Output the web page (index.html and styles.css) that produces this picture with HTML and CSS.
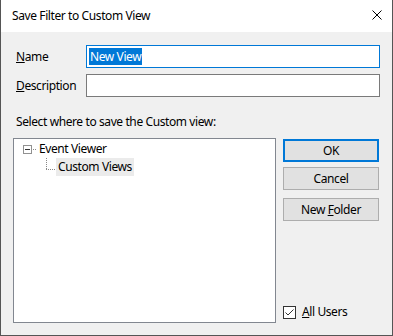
FILE: index.html
```html
<!DOCTYPE html>
<html lang="en">
<head>
    <meta charset="UTF-8">
    <title>Save Filter to Custom View</title>
    <link rel="stylesheet" href="styles.css">
</head>
<body>
    <div class="window">
        <div class="titlebar">
            <span class="title">Save Filter to Custom View</span>
            <svg class="close" width="10" height="10" viewBox="0 0 10 10">
                <path d="M0.5 0.5 L9.5 9.5 M9.5 0.5 L0.5 9.5" stroke="#000" stroke-width="1" fill="none"/>
            </svg>
        </div>

        <div class="content">
            <div class="field">
                <label class="field-label"><u>N</u>ame</label>
                <div class="input focused"><span class="selection">New View</span></div>
            </div>
            <div class="field">
                <label class="field-label"><u>D</u>escription</label>
                <div class="input"></div>
            </div>

            <div class="hint">Select where to save the Custom view:</div>

            <div class="main">
                <div class="tree">
                    <div class="tree-row">
                        <span class="expander"></span>
                        <span class="dots-h short"></span>
                        <span class="node-text">Event Viewer</span>
                    </div>
                    <div class="tree-row child">
                        <span class="dots-v"></span>
                        <span class="dots-h"></span>
                        <span class="node-text selected">Custom Views</span>
                    </div>
                </div>

                <div class="actions">
                    <button class="btn default">OK</button>
                    <button class="btn cancel">Cancel</button>
                    <button class="btn folder">New <u>F</u>older</button>
                    <label class="check">
                        <span class="box">
                            <svg width="11" height="11" viewBox="0 0 11 11">
                                <path d="M1.5 5.5 L4 8 L9.5 2.5" stroke="#333" stroke-width="1" fill="none"/>
                            </svg>
                        </span>
                        <span><u>A</u>ll Users</span>
                    </label>
                </div>
            </div>
        </div>
    </div>
</body>
</html>
```

FILE: styles.css
```css
body {
    margin: 0;
    font-family: "Noto Sans", "Open Sans", sans-serif;
    font-size: 12px;
    letter-spacing: -0.4px;
    color: #000;
    background: #fff;
}

.window {
    width: 393px;
    height: 336px;
    box-sizing: border-box;
    border: 1px solid #555;
    border-top: none;
    display: flex;
    flex-direction: column;
    background: #f0f0f0;
}

.titlebar {
    height: 32px;
    flex: none;
    background: #fff;
    display: flex;
    align-items: center;
    justify-content: space-between;
    padding: 0 10px 0 11px;
}

.title {
    line-height: 16px;
}

.close {
    display: block;
    margin-top: -2px;
}

.content {
    flex: 1;
    padding: 13px 11px 0 12px;
    display: flex;
    flex-direction: column;
}

.field {
    display: flex;
    align-items: center;
    margin-bottom: 6px;
}

.field-label {
    width: 73px;
    padding-left: 3px;
    box-sizing: border-box;
    line-height: 16px;
}

.input {
    width: 294px;
    height: 23px;
    box-sizing: border-box;
    border: 1px solid #7a7a7a;
    background: #fff;
    display: flex;
    align-items: center;
    padding-left: 2px;
}

.input.focused {
    border-color: #0078d7;
}

.selection {
    background: #0078d7;
    color: #fff;
    line-height: 17px;
    padding: 0 1px;
}

.hint {
    padding-left: 3px;
    margin-top: 11px;
    line-height: 16px;
}

.main {
    display: flex;
    gap: 7px;
    margin-top: 8px;
}

.tree {
    width: 263px;
    height: 185px;
    box-sizing: border-box;
    border: 1px solid #828790;
    background: #fff;
    padding: 1px 0 0 9px;
}

.tree-row {
    height: 18px;
    display: flex;
    align-items: center;
}

.expander {
    width: 9px;
    height: 9px;
    box-sizing: border-box;
    border: 1px solid #919191;
    position: relative;
    flex: none;
}

.expander::after {
    content: "";
    position: absolute;
    left: 1px;
    top: 3px;
    width: 5px;
    height: 1px;
    background: #333;
}

.dots-h {
    width: 10px;
    height: 1px;
    background-image: linear-gradient(to right, #888 50%, transparent 50%);
    background-size: 2px 1px;
    flex: none;
}

.dots-h.short {
    width: 4px;
    margin-left: 1px;
}

.node-text {
    line-height: 18px;
    padding: 0 2px;
}

.tree-row.child {
    padding-left: 23px;
    position: relative;
}

.dots-v {
    position: absolute;
    left: 23px;
    top: 0;
    width: 1px;
    height: 11px;
    background-image: linear-gradient(to bottom, #888 50%, transparent 50%);
    background-size: 1px 2px;
}

.tree-row.child .dots-h {
    margin-top: 4px;
}

.node-text.selected {
    background: #ebebeb;
}

.actions {
    width: 96px;
    display: flex;
    flex-direction: column;
}

.btn {
    height: 23px;
    box-sizing: border-box;
    border: 1px solid #adadad;
    background: #e1e1e1;
    font-family: inherit;
    font-size: 12px;
    letter-spacing: inherit;
    color: #000;
    padding: 0;
}

.btn.default {
    margin-top: 1px;
    border: 2px solid #0078d7;
}

.btn.cancel {
    margin-top: 5px;
}

.btn.folder {
    margin-top: 8px;
}

.check {
    margin-top: auto;
    margin-bottom: 3px;
    display: flex;
    align-items: center;
    gap: 6px;
    line-height: 16px;
}

.box {
    width: 13px;
    height: 13px;
    box-sizing: border-box;
    border: 1px solid #333;
    background: #fff;
    display: flex;
}
```
